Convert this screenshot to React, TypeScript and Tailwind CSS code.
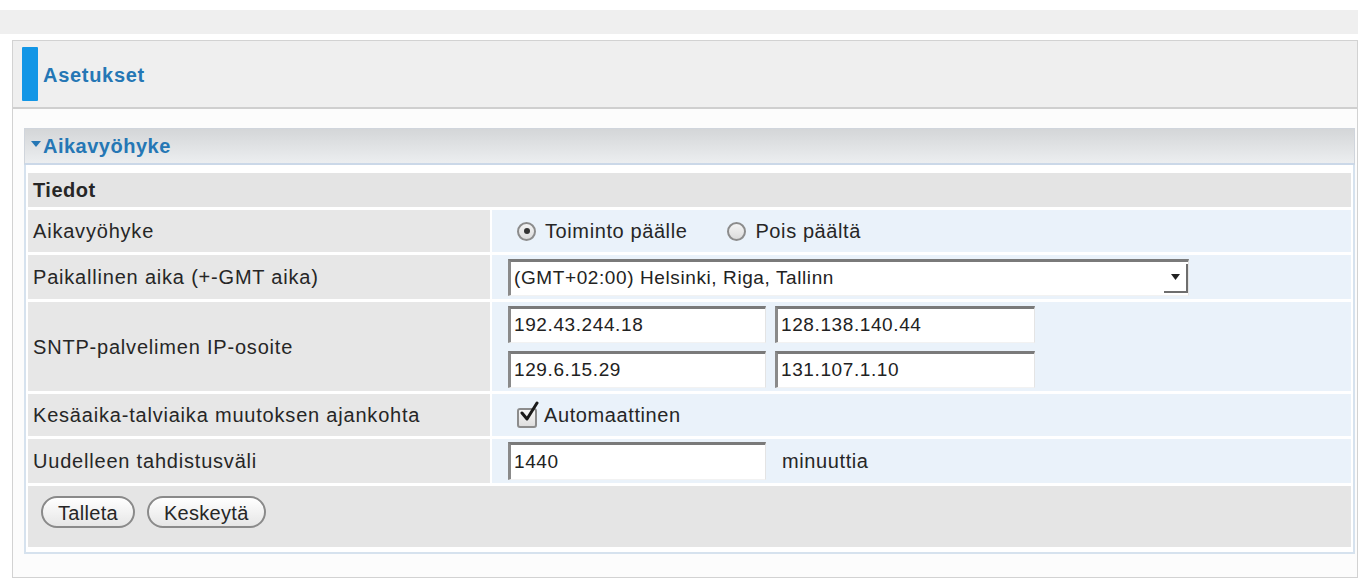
import React from "react";

const labelCell =
  "w-[462px] shrink-0 bg-[#e7e7e7] flex items-center pl-[5px] text-[20px] tracking-[0.8px] text-[#262626]";
const valueCell = "flex-1 bg-[#eaf2fa] flex items-center pl-[16px]";
const inset =
  "bg-white border-t-[3px] border-l-[3px] border-r border-b border-t-[#7a7a7a] border-l-[#8a8a8a] border-r-[#e4e4e4] border-b-[#f2f2f2] px-[3px] text-[19px] tracking-[0.6px] text-[#222] flex items-center";

const Radio = ({ checked, label }: { checked?: boolean; label: string }) => (
  <label className="flex items-center gap-[9px] mr-[40px]">
    <span className="w-[19px] h-[19px] rounded-full border-2 border-[#8c8c8c] bg-gradient-to-b from-[#f4f4f4] to-[#dcdcdc] flex items-center justify-center">
      {checked && <span className="w-[6px] h-[6px] rounded-full bg-[#333]" />}
    </span>
    <span className="text-[20px] tracking-[0.6px] text-[#262626]">{label}</span>
  </label>
);

const PillButton = ({ children }: { children: React.ReactNode }) => (
  <button className="h-[32px] px-[15px] rounded-full border-2 border-[#8a8a8a] bg-gradient-to-b from-white to-[#e6e6e6] text-[20px] tracking-[0.3px] text-[#262626] shadow-[inset_0_1px_0_#fff]">
    {children}
  </button>
);

export default function App() {
  return (
    <div className="w-[1362px] h-[579px] bg-white overflow-hidden font-['Liberation_Sans',Arial,sans-serif]">
      <div className="pt-[10px] pr-[4px]">
        <div className="h-[24px] bg-[#efefef]" />
      </div>

      <div className="mt-[6px] ml-[12px] mr-[4px] h-[538px] border border-[#d2d2d2] bg-[#fcfcfc]">
        {/* page title */}
        <div className="h-[68px] bg-[#efefef] border-b-2 border-[#cfcfcf] flex items-center pl-[9px]">
          <div className="w-[16px] h-[54px] bg-[#1296e6] rounded-[1px]" />
          <span className="ml-[5px] mt-[2px] text-[20px] font-bold tracking-[0.7px] text-[#2577b5]">Asetukset</span>
        </div>

        <div className="pt-[19px] pl-[11px] pr-[2px]">
          {/* section header */}
          <div className="h-[37px] bg-gradient-to-b from-[#d4d6d8] to-[#eceef0] border border-[#d0d5dc] border-b-2 border-b-[#cbd8e8] flex items-center pl-[6px]">
            <svg width="10" height="8" viewBox="0 0 10 8" className="mr-[2px] mt-[-2px]">
              <path d="M0 0 L10 0 L5 6 Z" fill="#2577b5" />
            </svg>
            <span className="text-[20px] font-bold tracking-[0.5px] text-[#2577b5]">Aikavyöhyke</span>
          </div>

          <div className="border-x-2 border-b-2 border-[#d6e2ee] bg-white pt-[8px] pl-[2px] pr-[2px] pb-[5px] flex flex-col gap-[3px]">
            <div className="h-[34px] bg-[#e4e4e4] flex items-center pl-[5px] text-[20px] font-bold tracking-[0.5px] text-[#262626]">
              Tiedot
            </div>

            <div className="h-[42px] flex gap-[2px]">
              <div className={labelCell}>Aikavyöhyke</div>
              <div className={valueCell + " pl-[25px]"}>
                <Radio checked label="Toiminto päälle" />
                <Radio label="Pois päältä" />
              </div>
            </div>

            <div className="h-[44px] flex gap-[2px]">
              <div className={labelCell}>Paikallinen aika (+-GMT aika)</div>
              <div className={valueCell}>
                <div className={inset + " w-[681px] h-[37px] justify-between pr-[0px]"}>
                  <span>(GMT+02:00) Helsinki, Riga, Tallinn</span>
                  <span className="w-[24px] h-[29px] border-r-2 border-b-2 border-[#6e6e6e] flex items-center justify-center">
                    <svg width="9" height="6" viewBox="0 0 9 6">
                      <path d="M0 0 L9 0 L4.5 6 Z" fill="#222" />
                    </svg>
                  </span>
                </div>
              </div>
            </div>

            <div className="h-[89px] flex gap-[2px]">
              <div className={labelCell}>SNTP-palvelimen IP-osoite</div>
              <div className={valueCell + " flex-col items-start justify-center gap-[8px]"}>
                <div className="flex gap-[9px]">
                  <div className={inset + " w-[258px] h-[37px]"}>192.43.244.18</div>
                  <div className={inset + " w-[260px] h-[37px]"}>128.138.140.44</div>
                </div>
                <div className="flex gap-[9px]">
                  <div className={inset + " w-[258px] h-[37px]"}>129.6.15.29</div>
                  <div className={inset + " w-[260px] h-[37px]"}>131.107.1.10</div>
                </div>
              </div>
            </div>

            <div className="h-[42px] flex gap-[2px]">
              <div className={labelCell}>Kesäaika-talviaika muutoksen ajankohta</div>
              <div className={valueCell + " pl-[25px]"}>
                <span className="relative w-[20px] h-[20px] rounded-[3px] border-2 border-[#8c8c8c] bg-gradient-to-b from-[#f7f7f7] to-[#dedede] mt-[6px]">
                  <svg width="22" height="22" viewBox="0 0 22 22" className="absolute left-[-1px] top-[-9px]">
                    <path d="M4 12 L9 18 L19 2" stroke="#1a1a1a" strokeWidth="3" fill="none" strokeLinecap="round" strokeLinejoin="round" />
                  </svg>
                </span>
                <span className="ml-[7px] text-[20px] tracking-[0.6px] text-[#262626]">Automaattinen</span>
              </div>
            </div>

            <div className="h-[44px] flex gap-[2px]">
              <div className={labelCell}>Uudelleen tahdistusväli</div>
              <div className={valueCell}>
                <div className={inset + " w-[258px] h-[38px]"}>1440</div>
                <span className="ml-[16px] text-[20px] tracking-[0.6px] text-[#262626]">minuuttia</span>
              </div>
            </div>

            <div className="h-[61px] bg-[#e5e5e5] flex items-center gap-[12px] pl-[13px] pb-[10px]">
              <PillButton>Talleta</PillButton>
              <PillButton>Keskeytä</PillButton>
            </div>
          </div>
        </div>
      </div>
    </div>
  );
}
